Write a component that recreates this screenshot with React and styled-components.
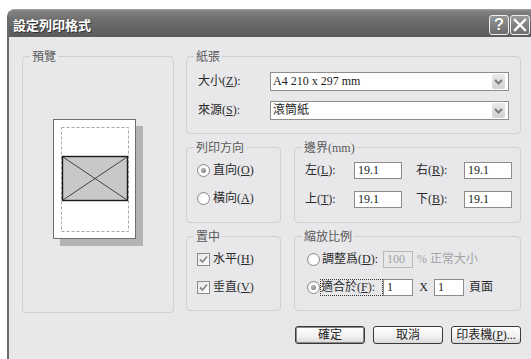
import React from 'react';
import styled, { createGlobalStyle } from 'styled-components';

const GlobalStyle = createGlobalStyle`
  html, body {
    margin: 0;
    overflow: hidden;
  }
  body {
    background: #fff;
    font-family: "Liberation Serif", "Noto Sans CJK TC", serif;
    color: #222;
  }
`;

const Window = styled.div`
  margin: 9px 0 0 7px;
  width: 524px;
  height: 350px;
  border-left: 2px solid #6a6a6a;
  border-top-left-radius: 8px;
  background: #e8e8ea;
  overflow: hidden;
  box-sizing: border-box;
`;

const TitleBar = styled.div`
  height: 28px;
  display: flex;
  align-items: center;
  padding: 0 1px 0 4px;
  background: linear-gradient(#a4a4a4 0, #828282 2px, #707070 35%, #636363 70%, #5a5a5a 100%);
`;

const Title = styled.div`
  font-family: "Noto Sans CJK TC", sans-serif;
  font-weight: 700;
  font-size: 13px;
  color: #fff;
  text-shadow: 1px 1px 0 #333;
  flex: 1;
  padding-top: 2px;
`;

const Controls = styled.div`
  display: flex;
  gap: 1px;
  align-self: flex-end;
  margin-bottom: 2px;
`;

const CtrlButton = styled.div`
  width: 20px;
  height: 20px;
  box-sizing: border-box;
  border: 1px solid #eee;
  border-radius: 3px;
  background: linear-gradient(#999, #6c6c6c);
  display: flex;
  align-items: center;
  justify-content: center;
  color: #fff;
  font-family: "Liberation Sans", sans-serif;
  font-weight: 700;
  font-size: 17px;
  text-shadow: 0 0 1px #333;
`;

const Body = styled.div`
  display: grid;
  grid-template-columns: 152px 335px;
  column-gap: 12px;
  align-items: start;
  padding: 19px 0 0 13px;
`;

const Group = styled.div`
  position: relative;
  box-sizing: border-box;
  border: 1px solid #d0d0d3;
  border-radius: 4px;
  padding: ${p => p.$pad || '14px 10px'};
  ${p => p.$w && `width: ${p.$w}px;`}
  ${p => p.$h && `height: ${p.$h}px;`}
`;

const Legend = styled.span`
  position: absolute;
  top: -7px;
  left: 7px;
  padding: 0 2px;
  background: #e8e8ea;
  color: #5a5a5a;
  font-size: 12px;
  line-height: 14px;
`;

const PreviewArea = styled.div`
  height: 255px;
  display: flex;
  align-items: center;
  justify-content: center;
  padding: 0 0 4px;
  box-sizing: border-box;
`;

const Page = styled.div`
  width: 83px;
  height: 120px;
  box-sizing: border-box;
  border: 1px solid #6e6e6e;
  background: #fff;
  box-shadow: 7px 7px 0 #b3b3b5;
  margin: 0 7px 7px 0;
`;

const Column = styled.div`
  display: flex;
  flex-direction: column;
  gap: 13px;
`;

const PaperRows = styled.div`
  display: flex;
  flex-direction: column;
  gap: 10px;
`;

const FieldRow = styled.div`
  display: grid;
  grid-template-columns: 72px 1fr;
  align-items: center;
`;

const Text = styled.span`
  font-size: 12px;
  line-height: 17px;
  color: ${p => (p.$dim ? '#a3a3a3' : '#2a2a2a')};
  white-space: nowrap;
  margin-left: ${p => p.$ml || 0}px;
`;

const Select = styled.div`
  position: relative;
  height: 19px;
  box-sizing: border-box;
  border: 1px solid #8e8e8e;
  background: #fff;
  padding-left: 2px;
  font-size: 12px;
  line-height: 17px;
`;

const SelectArrow = styled.div`
  position: absolute;
  right: 3px;
  top: 1px;
  width: 13px;
  height: 15px;
  border-radius: 2px;
  background: linear-gradient(#e8e8e8, #d2d2d2);
  display: flex;
  align-items: center;
  justify-content: center;
`;

const Pair = styled.div`
  display: flex;
  gap: 13px;
`;

const OptionList = styled.div`
  display: flex;
  flex-direction: column;
  gap: 11px;
`;

const Option = styled.div`
  display: flex;
  align-items: center;
  height: 17px;
  gap: ${p => p.$gap ?? 3}px;
`;

const RadioMark = styled.span`
  width: 13px;
  height: 13px;
  box-sizing: border-box;
  border-radius: 50%;
  border: 1px solid #8a8a8a;
  background: radial-gradient(circle at 60% 60%, #fff 40%, #e4e4e4);
  display: flex;
  align-items: center;
  justify-content: center;
  flex: none;
  &::after {
    content: '';
    display: ${p => (p.$on ? 'block' : 'none')};
    width: 5px;
    height: 5px;
    border-radius: 50%;
    background: radial-gradient(circle at 40% 40%, #bbb, #6e6e6e);
  }
`;

const CheckMark = styled.span`
  width: 13px;
  height: 13px;
  box-sizing: border-box;
  border: 1px solid #8a8a8a;
  background: linear-gradient(135deg, #e6e6e6, #fff);
  display: flex;
  align-items: center;
  justify-content: center;
  flex: none;
`;

const MarginGrid = styled.div`
  display: grid;
  grid-template-columns: 49px 62px 48px 48px;
  row-gap: 12px;
  align-items: center;
`;

const Input = styled.div`
  width: ${p => p.$w || 48}px;
  height: 17px;
  box-sizing: border-box;
  border: 1px solid ${p => (p.$dim ? '#b9b9b9' : '#8c8c8c')};
  background: ${p => (p.$dim ? '#e8e8ea' : '#fff')};
  color: ${p => (p.$dim ? '#a3a3a3' : '#222')};
  padding-left: 3px;
  font-size: 12px;
  line-height: 15px;
  flex: none;
`;

const ScaleLabel = styled.span`
  width: 63px;
  box-sizing: border-box;
  padding-left: ${p => (p.$focus ? 0 : 1)}px;
  font-size: 12px;
  line-height: 15px;
  color: #2a2a2a;
  white-space: nowrap;
  border: 1px dotted ${p => (p.$focus ? '#333' : 'transparent')};
`;

const Times = styled.span`
  width: 21px;
  text-align: center;
  font-size: 12px;
  color: #222;
`;

const Buttons = styled.div`
  display: flex;
  justify-content: flex-end;
  gap: 8px;
  margin-top: 2px;
`;

const Button = styled.div`
  width: 70px;
  height: 18px;
  box-sizing: border-box;
  border: 1px solid #3a3a3a;
  border-radius: 3px;
  background: linear-gradient(#ffffff, #f0f0f0 60%, #d8d8d8);
  box-shadow: ${p => (p.$primary ? 'inset 0 0 0 1px #8a8a8a' : 'none')};
  font-size: 12px;
  line-height: 16px;
  text-align: center;
  color: #222;
`;

const Key = ({ k }) => (
  <>
    (<u>{k}</u>)
  </>
);

const Chevron = () => (
  <svg width="9" height="6" viewBox="0 0 9 6">
    <polyline points="1,1 4.5,4.5 8,1" fill="none" stroke="#7a7a7a" strokeWidth="2" />
  </svg>
);

const Tick = () => (
  <svg width="9" height="9" viewBox="0 0 9 9">
    <polyline points="1,4.5 3.5,7 8,1.5" fill="none" stroke="#8a8a8a" strokeWidth="1.8" />
  </svg>
);

const Radio = ({ on, children }) => (
  <Option>
    <RadioMark $on={on} />
    <Text>{children}</Text>
  </Option>
);

const Check = ({ children }) => (
  <Option>
    <CheckMark>
      <Tick />
    </CheckMark>
    <Text>{children}</Text>
  </Option>
);

const margins = [
  ['左', 'L', '右', 'R'],
  ['上', 'T', '下', 'B'],
];

export default function App() {
  return (
    <>
      <GlobalStyle />
      <Window>
        <TitleBar>
          <Title>設定列印格式</Title>
          <Controls>
            <CtrlButton>?</CtrlButton>
            <CtrlButton>
              <svg width="14" height="14" viewBox="0 0 14 14">
                <path d="M2 2 L12 12 M12 2 L2 12" stroke="#fff" strokeWidth="2.4" strokeLinecap="square" />
              </svg>
            </CtrlButton>
          </Controls>
        </TitleBar>
        <Body>
          <Group $pad="0" $h={257}>
            <Legend>預覽</Legend>
            <PreviewArea>
              <Page>
                <svg width="81" height="118" viewBox="0 0 81 118">
                  <rect x="7.5" y="7.5" width="67" height="104" fill="none" stroke="#a8a8a8" strokeDasharray="3 2" />
                  <rect x="8.5" y="36.5" width="65" height="44" fill="#c8c8c8" stroke="#1a1a1a" strokeWidth="1.4" />
                  <path d="M9 37 L73 80 M73 37 L9 80" stroke="#333" strokeWidth="0.9" />
                </svg>
              </Page>
            </PreviewArea>
          </Group>
          <Column>
            <Group $pad="15px 11px 13px 11px">
              <Legend>紙張</Legend>
              <PaperRows>
                <FieldRow>
                  <Text>大小<Key k="Z" />:</Text>
                  <Select>
                    A4 210 x 297 mm
                    <SelectArrow><Chevron /></SelectArrow>
                  </Select>
                </FieldRow>
                <FieldRow>
                  <Text>來源<Key k="S" />:</Text>
                  <Select>
                    滾筒紙
                    <SelectArrow><Chevron /></SelectArrow>
                  </Select>
                </FieldRow>
              </PaperRows>
            </Group>
            <Pair>
              <Group $w={95}>
                <Legend>列印方向</Legend>
                <OptionList>
                  <Radio on>直向<Key k="O" /></Radio>
                  <Radio>橫向<Key k="A" /></Radio>
                </OptionList>
              </Group>
              <Group $w={227} $pad="14px 8px 14px 10px">
                <Legend>邊界(mm)</Legend>
                <MarginGrid>
                  {margins.map(([a, ka, b, kb]) => (
                    <React.Fragment key={a}>
                      <Text>{a}<Key k={ka} />:</Text>
                      <Input>19.1</Input>
                      <Text>{b}<Key k={kb} />:</Text>
                      <Input>19.1</Input>
                    </React.Fragment>
                  ))}
                </MarginGrid>
              </Group>
            </Pair>
            <Pair>
              <Group $w={95}>
                <Legend>置中</Legend>
                <OptionList>
                  <Check>水平<Key k="H" /></Check>
                  <Check>垂直<Key k="V" /></Check>
                </OptionList>
              </Group>
              <Group $w={227} $pad="14px 8px 14px 12px">
                <Legend>縮放比例</Legend>
                <OptionList>
                  <Option $gap={0}>
                    <RadioMark />
                    <ScaleLabel>調整爲<Key k="D" />:</ScaleLabel>
                    <Input $w={30} $dim>100</Input>
                    <Text $dim $ml={4}>% 正常大小</Text>
                  </Option>
                  <Option $gap={0}>
                    <RadioMark $on />
                    <ScaleLabel $focus>適合於<Key k="F" />:</ScaleLabel>
                    <Input $w={30}>1</Input>
                    <Times>X</Times>
                    <Input $w={30}>1</Input>
                    <Text $ml={5}>頁面</Text>
                  </Option>
                </OptionList>
              </Group>
            </Pair>
            <Buttons>
              <Button $primary>確定</Button>
              <Button>取消</Button>
              <Button>印表機<Key k="P" />...</Button>
            </Buttons>
          </Column>
        </Body>
      </Window>
    </>
  );
}
